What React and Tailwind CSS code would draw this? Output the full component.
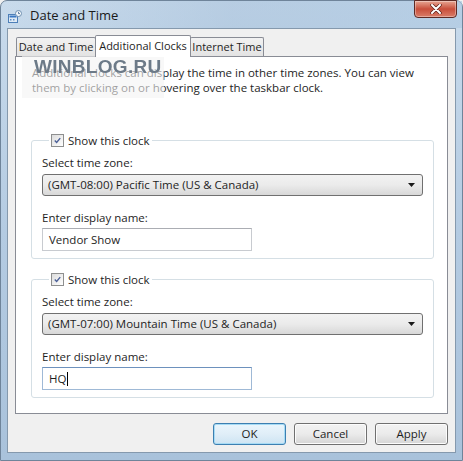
import React from "react";

const font = "font-['Open_Sans',sans-serif]";

function CheckBox() {
  return (
    <span className="w-[13px] h-[13px] border border-[#8e8f8f] bg-gradient-to-br from-[#dcdcdc] to-[#ffffff] p-[2px] flex items-center justify-center">
      <svg viewBox="0 0 9 9" className="w-[9px] h-[9px]">
        <path d="M1 4.5 L3.4 7 L8 1.5" fill="none" stroke="#4a5f97" strokeWidth="1.8" />
      </svg>
    </span>
  );
}

function ClockGroup({ zone, name, focused }) {
  return (
    <fieldset className="border border-[#d5dfe5] rounded-[3px] ml-[15px] mr-[13px] px-[10px] pb-[7px]">
      <legend className="ml-[7px] px-[2px] flex items-center gap-[4px] text-[#1e1e1e] leading-[15px]">
        <CheckBox />
        <span>Show this clock</span>
      </legend>
      <div className="pt-[7px] leading-[15px] text-[#1e1e1e]">Select time zone:</div>
      <div className="mt-[4px] h-[22px] border border-[#707070] rounded-[3px] bg-gradient-to-b from-[#f2f2f2] via-[#ebebeb] to-[#d8d8d8] flex items-center pl-[5px] pr-[7px] text-[#1e1e1e]">
        <span className="flex-1">{zone}</span>
        <svg viewBox="0 0 7 4" className="w-[7px] h-[4px]">
          <path d="M0 0 H7 L3.5 4 Z" fill="#1a1a1a" />
        </svg>
      </div>
      <div className="mt-[14px] leading-[15px] text-[#1e1e1e]">Enter display name:</div>
      <div
        className={
          "mt-[3px] h-[23px] w-[210px] border bg-white flex items-center pl-[6px] text-[#1e1e1e] " +
          (focused ? "border-[#9fb9d6] border-t-[#6d91bd]" : "border-[#c8cbd0] border-t-[#abadb3]")
        }
      >
        <span>{name}</span>
        {focused && <span className="w-px h-[14px] bg-black ml-px" />}
      </div>
    </fieldset>
  );
}

function Button({ children, focused }) {
  return (
    <button
      className={
        "w-[73px] h-[22px] rounded-[3px] border text-[#1e1e1e] leading-none " +
        (focused
          ? "border-[#3c7fb1] shadow-[inset_0_0_0_1px_#a6dbf5] bg-gradient-to-b from-[#eaf6fd] via-[#e0eef8] to-[#cde4f3]"
          : "border-[#707070] shadow-[inset_0_0_0_1px_#fcfcfc] bg-gradient-to-b from-[#f2f2f2] via-[#ebebeb] to-[#d5d5d5]")
      }
    >
      {children}
    </button>
  );
}

export default function App() {
  return (
    <div className={"w-[463px] h-[461px] overflow-hidden bg-[#f0f0f0] text-[11.5px] " + font}>
      <div className="w-full h-full flex flex-col rounded-t-[7px] border border-[#6f849a] bg-gradient-to-b from-[#c9dbec] via-[#b4cbe2] to-[#a9c2db]">
        {/* Title bar */}
        <div className="h-[27px] flex items-start shrink-0 bg-gradient-to-r from-transparent via-[#9db8d4]/40 to-[#aac6e0]/60">
          <svg viewBox="0 0 14 14" className="w-[14px] h-[14px] ml-[7px] mt-[9px]">
            <rect x="0.5" y="4.5" width="9" height="8" fill="#dfeaf5" stroke="#4d7fb8" />
            <rect x="1.5" y="5.5" width="7" height="2" fill="#3b78c4" />
            <rect x="2" y="9" width="1.5" height="1.5" fill="#5f8ec6" />
            <rect x="5" y="9" width="1.5" height="1.5" fill="#5f8ec6" />
            <circle cx="10.5" cy="3.5" r="3" fill="#f4f8fc" stroke="#6e8fb0" />
            <path d="M10.5 1.8 V3.6 H12" fill="none" stroke="#3a5e86" strokeWidth="0.8" />
          </svg>
          <span className="ml-[8px] mt-[6px] text-[13px] text-[#1a1a1a] leading-[17px] whitespace-nowrap">Date and Time</span>
          <div className="flex-1" />
          <div className="w-[43px] h-[18px] mr-[5px] -mt-px rounded-b-[4px] border border-[#5e2a24] bg-gradient-to-b from-[#e6a593] via-[#c84e3b] to-[#d97c68] flex items-center justify-center shadow-[inset_0_0_0_1px_rgba(255,255,255,0.35)]">
            <svg viewBox="0 0 12 10" className="w-[12px] h-[10px]">
              <path d="M2 1 L10 9 M10 1 L2 9" stroke="#5a1f18" strokeWidth="3.4" strokeLinecap="round" />
              <path d="M2 1 L10 9 M10 1 L2 9" stroke="#ffffff" strokeWidth="2" strokeLinecap="round" />
            </svg>
          </div>
        </div>

        {/* Client area */}
        <div className="flex-1 mx-[6px] mb-[7px] bg-[#f0f0f0] border border-[#8599ad] flex flex-col relative">
          {/* Tabs */}
          <div className="flex items-end pl-[8px] pt-[6px] h-[27px] shrink-0 whitespace-nowrap text-[11px]">
            <div className="w-[80px] h-[19px] border border-b-0 border-[#898c95] bg-gradient-to-b from-[#f2f2f2] to-[#e3e3e3] flex items-center justify-center text-[#1e1e1e] rounded-t-[2px]">
              Date and Time
            </div>
            <div className="w-[96px] h-[22px] -mx-px border border-b-0 border-[#898c95] bg-white flex items-start pt-[2px] justify-center text-[#1e1e1e] relative z-10 -mb-px rounded-t-[2px]">
              Additional Clocks
            </div>
            <div className="w-[74px] h-[19px] border border-b-0 border-[#898c95] bg-gradient-to-b from-[#f2f2f2] to-[#e3e3e3] flex items-center justify-center text-[#1e1e1e] rounded-t-[2px]">
              Internet Time
            </div>
          </div>

          {/* Panel */}
          <div className="h-[358px] ml-[7px] mr-[7px] border border-[#898c95] bg-white shrink-0">
            <p className="pt-[8px] pl-[16px] leading-[15px] text-[#1e1e1e] whitespace-nowrap">
              Additional clocks can display the time in other time zones. You can view
              <br />
              them by clicking on or hovering over the taskbar clock.
            </p>
            <div className="mt-[38px]">
              <ClockGroup zone="(GMT-08:00) Pacific Time (US & Canada)" name="Vendor Show" />
            </div>
            <div className="mt-[13px]">
              <ClockGroup zone="(GMT-07:00) Mountain Time (US & Canada)" name="HQ" focused />
            </div>
          </div>

          {/* Buttons */}
          <div className="flex justify-end gap-[8px] mt-[9px] mr-[7px]">
            <Button focused>OK</Button>
            <Button>Cancel</Button>
            <Button>Apply</Button>
          </div>

          {/* Watermark */}
          <div className="absolute left-[14px] top-[27px] w-[142px] h-[42px] bg-[#f4f4f4]/60 flex items-start pl-[12px]">
            <span className="font-['Liberation_Sans',sans-serif] font-bold text-[19px] leading-[22px] text-[#6c7a88] blur-[0.6px] tracking-[0.3px]">
              WINBLOG.RU
            </span>
          </div>
        </div>
      </div>
    </div>
  );
}
